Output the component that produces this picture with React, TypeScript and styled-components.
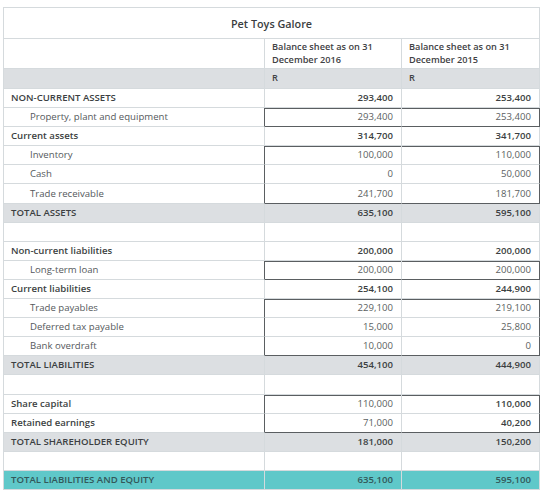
import React from 'react'
import styled, { createGlobalStyle, css } from 'styled-components'

const GlobalStyle = createGlobalStyle`
    body {
        margin: 0;
        background: #ffffff;
        font-family: "Open Sans", "Liberation Sans", sans-serif;
    }
`;

const line = '#d5dadd';
const dark = '#5a5e61';

type Kind = 'item' | 'head' | 'sub' | 'total' | 'blank' | 'grand';
type Box = 'single' | 'top' | 'mid' | 'bottom';

interface IRow {
    label?: string,
    kind: Kind,
    v1?: string,
    v2?: string,
    box?: Box,
    strong2?: boolean,
}

const rows: IRow[] = [
    { label: 'NON-CURRENT ASSETS', kind: 'head', v1: '293,400', v2: '253,400' },
    { label: 'Property, plant and equipment', kind: 'item', v1: '293,400', v2: '253,400', box: 'single' },
    { label: 'Current assets', kind: 'sub', v1: '314,700', v2: '341,700' },
    { label: 'Inventory', kind: 'item', v1: '100,000', v2: '110,000', box: 'top' },
    { label: 'Cash', kind: 'item', v1: '0', v2: '50,000', box: 'mid' },
    { label: 'Trade receivable', kind: 'item', v1: '241,700', v2: '181,700', box: 'bottom' },
    { label: 'TOTAL ASSETS', kind: 'total', v1: '635,100', v2: '595,100' },
    { kind: 'blank' },
    { label: 'Non-current liabilities', kind: 'sub', v1: '200,000', v2: '200,000' },
    { label: 'Long-term loan', kind: 'item', v1: '200,000', v2: '200,000', box: 'single' },
    { label: 'Current liabilities', kind: 'sub', v1: '254,100', v2: '244,900' },
    { label: 'Trade payables', kind: 'item', v1: '229,100', v2: '219,100', box: 'top' },
    { label: 'Deferred tax payable', kind: 'item', v1: '15,000', v2: '25,800', box: 'mid' },
    { label: 'Bank overdraft', kind: 'item', v1: '10,000', v2: '0', box: 'bottom' },
    { label: 'TOTAL LIABILITIES', kind: 'total', v1: '454,100', v2: '444,900' },
    { kind: 'blank' },
    { label: 'Share capital', kind: 'sub', v1: '110,000', v2: '110,000', box: 'top', strong2: true },
    { label: 'Retained earnings', kind: 'sub', v1: '71,000', v2: '40,200', box: 'bottom', strong2: true },
    { label: 'TOTAL SHAREHOLDER EQUITY', kind: 'total', v1: '181,000', v2: '150,200' },
    { kind: 'blank' },
    { label: 'TOTAL LIABILITIES AND EQUITY', kind: 'grand', v1: '635,100', v2: '595,100' },
];

const Sheet = styled.table`
    margin: 7px 0 0 3px;
    width: 536px;
    border-collapse: separate;
    border-spacing: 0;
    border-top: 1px solid ${line};
    border-left: 1px solid ${line};
    table-layout: fixed;
    font-size: 9.6px;
    color: #4a4d50;
`;

const TitleCell = styled.th`
    height: 30px;
    padding: 0;
    border-right: 1px solid ${line};
    border-bottom: 1px solid ${line};
    font-size: 10.8px;
    font-weight: 600;
    color: #3a3d40;
    text-align: center;
`;

const HeadCell = styled.th<{ $grey?: boolean }>`
    padding: 0 7px;
    border-right: 1px solid ${line};
    border-bottom: 1px solid ${line};
    text-align: left;
    font-size: 9.2px;
    font-weight: 600;
    color: #3f4245;
    line-height: 12.5px;
    background: ${p => (p.$grey ? '#dcdfe2' : 'transparent')};
`;

const Row = styled.tr<{ $kind: Kind }>`
    height: 19.1px;
    background: ${p => (p.$kind === 'total' ? '#dcdfe2' : p.$kind === 'grand' ? '#5fc8c9' : 'transparent')};
`;

const LabelCell = styled.td<{ $kind: Kind, $boxed: boolean }>`
    padding: 0 0 0 ${p => (p.$kind === 'item' ? 26 : 7)}px;
    border-right: 1px solid ${p => (p.$boxed ? dark : line)};
    border-bottom: 1px solid ${line};
    white-space: nowrap;
    line-height: 12px;
    font-weight: ${p => (p.$kind === 'item' ? 400 : 600)};
    color: ${p => (p.$kind === 'item' ? '#55595c' : p.$kind === 'grand' ? '#33585a' : '#3c3f42')};
`;

const ValueCell = styled.td<{ $kind: Kind, $box?: Box, $last?: boolean, $strong?: boolean }>`
    padding: 0 8px 0 0;
    text-align: right;
    line-height: 12px;
    border-right: 1px solid ${p => (p.$box && p.$last ? dark : line)};
    border-bottom: 1px solid ${p => (p.$box === 'single' || p.$box === 'bottom' ? dark : line)};
    font-weight: ${p => (p.$strong ? 600 : 400)};
    color: ${p => (p.$kind === 'grand' ? '#33585a' : p.$strong ? '#3c3f42' : '#5b5f62')};
    ${p => (p.$box === 'single' || p.$box === 'top') && css`
        box-shadow: inset 0 1px 0 ${dark};
    `}
`;

const BlankCell = styled.td`
    padding: 0;
    border-right: 1px solid ${line};
    border-bottom: 1px solid ${line};
`;

export default function App() {
    return (
        <>
            <GlobalStyle />
            <Sheet>
                <colgroup>
                    <col style={{ width: 261 }} />
                    <col style={{ width: 137 }} />
                    <col style={{ width: 138 }} />
                </colgroup>
                <thead>
                    <tr>
                        <TitleCell colSpan={3}>Pet Toys Galore</TitleCell>
                    </tr>
                    <tr style={{ height: 30 }}>
                        <HeadCell />
                        <HeadCell>Balance sheet as on 31<br />December 2016</HeadCell>
                        <HeadCell>Balance sheet as on 31<br />December 2015</HeadCell>
                    </tr>
                    <tr style={{ height: 20 }}>
                        <HeadCell $grey />
                        <HeadCell $grey>R</HeadCell>
                        <HeadCell $grey>R</HeadCell>
                    </tr>
                </thead>
                <tbody>
                    {rows.map((r, i) => r.kind === 'blank' ? (
                        <Row key={i} $kind="blank">
                            <BlankCell />
                            <BlankCell />
                            <BlankCell />
                        </Row>
                    ) : (
                        <Row key={i} $kind={r.kind}>
                            <LabelCell $kind={r.kind} $boxed={!!r.box}>{r.label}</LabelCell>
                            <ValueCell $kind={r.kind} $box={r.box} $strong={r.kind !== 'item' && !r.strong2}>{r.v1}</ValueCell>
                            <ValueCell $kind={r.kind} $box={r.box} $last $strong={r.kind !== 'item'}>{r.v2}</ValueCell>
                        </Row>
                    ))}
                </tbody>
            </Sheet>
        </>
    )
}
